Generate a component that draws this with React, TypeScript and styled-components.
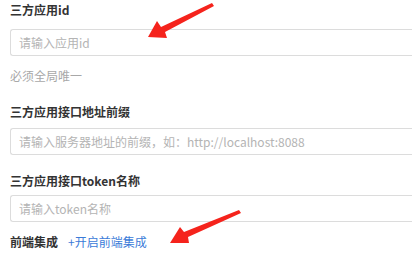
import styled, { createGlobalStyle } from "styled-components";

const GlobalStyle = createGlobalStyle`
  html, body {
    margin: 0;
    padding: 0;
    background: #fff;
  }
  body {
    font-family: "Noto Sans CJK SC", "Noto Sans", sans-serif;
  }
`;

const Page = styled.div`
  position: relative;
  width: 417px;
  height: 261px;
  overflow: hidden;
  padding: 0 5px 0 10px;
  box-sizing: border-box;
  display: flex;
  flex-direction: column;
`;

const Label = styled.div<{ $top?: number; $gap?: number }>`
  margin-top: ${(p) => p.$top ?? 0}px;
  margin-bottom: ${(p) => p.$gap ?? 8}px;
  height: 20px;
  line-height: 20px;
  font-size: 12px;
  font-weight: 700;
  color: #333;
`;

const Input = styled.input`
  display: block;
  width: 100%;
  height: 27px;
  box-sizing: border-box;
  border: 1px solid #dcdcdc;
  border-right: none;
  border-radius: 3px 0 0 3px;
  padding: 0 8px;
  font-family: inherit;
  font-size: 12px;
  color: #333;
  outline: none;
  &::placeholder {
    color: #b4b4b4;
  }
`;

const Hint = styled.div`
  margin-top: 10px;
  height: 20px;
  line-height: 20px;
  font-size: 12px;
  color: #a8a8a8;
`;

const Row = styled.div`
  margin-top: 10px;
  height: 20px;
  line-height: 20px;
  display: flex;
  gap: 10px;
  font-size: 12px;
`;

const RowTitle = styled.span`
  font-weight: 700;
  color: #333;
`;

const Link = styled.a`
  color: #3b7bd8;
  text-decoration: none;
  cursor: pointer;
`;

const Marks = styled.svg`
  position: absolute;
  left: 0;
  top: 0;
  pointer-events: none;
`;

export default function App() {
  return (
    <>
      <GlobalStyle />
      <Page>
        <Label $gap={9}>三方应用id</Label>
        <Input placeholder="请输入应用id" />
        <Hint>必须全局唯一</Hint>
        <Label $top={16} $gap={6}>三方应用接口地址前缀</Label>
        <Input placeholder="请输入服务器地址的前缀，如：http://localhost:8088" />
        <Label $top={16} $gap={4}>三方应用接口token名称</Label>
        <Input placeholder="请输入token名称" />
        <Row>
          <RowTitle>前端集成</RowTitle>
          <Link>+开启前端集成</Link>
        </Row>
        <Marks width="417" height="261" viewBox="0 0 417 261">
          <polygon
            fill="#f5231c"
            points="148,37 157,21 161,27 212,3 214,6 165,32 167,38"
          />
          <polygon
            fill="#f5231c"
            points="170,243 180,227 184,232 239,210 241,213 188,237 189,243"
          />
        </Marks>
      </Page>
    </>
  );
}
